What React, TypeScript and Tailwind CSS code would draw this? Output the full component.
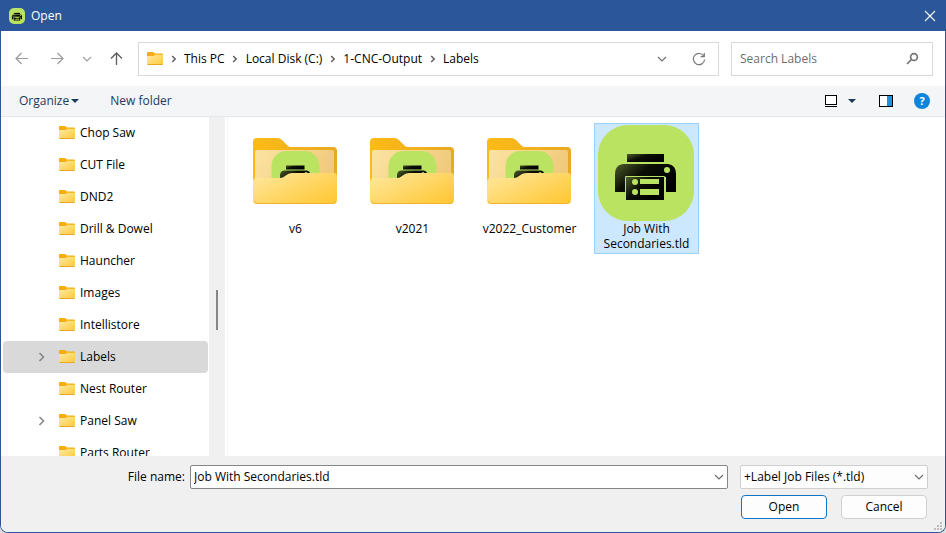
import { useState } from "react";

const folders = [
  { name: "Chop Saw" },
  { name: "CUT File" },
  { name: "DND2" },
  { name: "Drill & Dowel" },
  { name: "Hauncher" },
  { name: "Images" },
  { name: "Intellistore" },
  { name: "Labels", expandable: true, selected: true },
  { name: "Nest Router" },
  { name: "Panel Saw", expandable: true },
  { name: "Parts Router" },
];

const crumbs = ["This PC", "Local Disk (C:)", "1-CNC-Output", "Labels"];

type IconProps = { className?: string };

function SmallFolder({ className = "" }: IconProps) {
  return (
    <svg className={`h-4 w-4 shrink-0 ${className}`} viewBox="0 0 16 16" aria-hidden="true">
      <defs>
        <linearGradient id="smallFront" x1="0" y1="0" x2="1" y2="1">
          <stop offset="0" stopColor="#ffe9a3" />
          <stop offset="1" stopColor="#ffc93c" />
        </linearGradient>
      </defs>
      <path d="M0 2Q0 1 1 1H6L8 2.6H15Q16 2.6 16 3.600V8H0Z" fill="#f5ad0b" />
      <path d="M0 5H6.6L8 3.800H15.5L16 4.200V13Q16 14 15 14H1Q0 14 0 13Z" fill="url(#smallFront)" />
      <path d="M.5 13.500H15.5" stroke="#e8a723" strokeWidth="1" />
    </svg>
  );
}

function Chevron({ dir, className = "" }: IconProps & { dir: "right" | "down" }) {
  return dir === "right" ? (
    <svg className={`shrink-0 ${className}`} width="6" height="8" viewBox="0 0 6 8" fill="none" stroke="currentColor" aria-hidden="true">
      <path d="M1.2 1L4.2 4L1.2 7" strokeWidth="1.5" />
    </svg>
  ) : (
    <svg className={`shrink-0 ${className}`} width="10" height="6" viewBox="0 0 10 6" fill="none" stroke="currentColor" aria-hidden="true">
      <path d="M1 1L5 5L9 1" strokeWidth="1.1" />
    </svg>
  );
}

function PrinterGlyph() {
  return (
    <>
      <defs>
        <linearGradient id="ink" x1="0" y1="0" x2="1" y2="0.6">
          <stop offset="0" stopColor="#4d5f2a" />
          <stop offset="0.45" stopColor="#0c0f06" />
          <stop offset="1" stopColor="#000" />
        </linearGradient>
      </defs>
      <rect width="96" height="96" rx="30" fill="#b9e360" />
      <rect x="29" y="29" width="37" height="8" fill="url(#ink)" />
      <path d="M25 39H70Q78 40 78 49V67H68V52H27V67H17V49Q17 40 25 39Z" fill="url(#ink)" />
      <rect x="28" y="52" width="38" height="23" fill="url(#ink)" />
      <path d="M27.500 67V51.500H66.500V67" fill="none" stroke="#b9e360" />
      <circle cx="69" cy="45" r="3" fill="#b9e360" />
      <circle cx="37" cy="57" r="3" fill="#b9e360" />
      <circle cx="37" cy="67" r="3" fill="#b9e360" />
      <rect x="42" y="54" width="19" height="5" fill="#b9e360" />
      <rect x="42" y="64" width="19" height="6" fill="#b9e360" />
    </>
  );
}

function LabelAppIcon({ className = "" }: IconProps) {
  return (
    <svg className={`shrink-0 ${className}`} viewBox="0 0 96 96" aria-hidden="true">
      <PrinterGlyph />
    </svg>
  );
}

function LargeFolder({ className = "" }: IconProps) {
  return (
    <svg className={`shrink-0 ${className}`} viewBox="0 0 96 96" aria-hidden="true">
      <defs>
        <linearGradient id="back" x1="0" y1="0" x2="1" y2="0">
          <stop offset="0" stopColor="#fdbb16" />
          <stop offset="1" stopColor="#e9a922" />
        </linearGradient>
        <linearGradient id="paper" x1="0" y1="0" x2="1" y2="0.3">
          <stop offset="0" stopColor="#fce3a2" />
          <stop offset="1" stopColor="#f0ca7c" />
        </linearGradient>
        <linearGradient id="front" x1="0" y1="0" x2="1" y2="0.8">
          <stop offset="0" stopColor="#ffe8a0" />
          <stop offset="1" stopColor="#ffc938" />
        </linearGradient>
      </defs>
      <path d="M6 17Q6 13 10 13H30Q33 13 35 15L41 21Q42 22 44 22H86Q90 22 90 26V60H6Z" fill="url(#back)" />
      <rect x="8" y="25" width="79" height="40" rx="2" fill="url(#paper)" />
      <svg x="24" y="26" width="49" height="48" viewBox="0 0 96 96">
        <PrinterGlyph />
      </svg>
      <path d="M6 57Q6 53 10 53H33Q36 53 38 51L41 49Q43 48 46 48H87Q90 48 90 51V75Q90 79 86 79H10Q6 79 6 75Z" fill="url(#front)" />
      <path d="M7 76Q8 78.500 10 78.500H86Q88 78.500 89 76" fill="none" stroke="#f2b42e" />
    </svg>
  );
}

function FileTile({ name, selected = false }: { name: string; selected?: boolean }) {
  return (
    <button
      type="button"
      className={`flex w-[105px] flex-col border pt-px pb-0.5 leading-[15px] ${
        selected ? "border-[#99d1ff] bg-[#cce8ff]" : "border-transparent"
      }`}
    >
      {selected ? <LabelAppIcon className="ml-[3px] h-24 w-24" /> : <LargeFolder className="ml-[3px] h-24 w-24" />}
      <span className="w-full text-center">{name}</span>
    </button>
  );
}

export default function App() {
  const [fileName, setFileName] = useState("Job With Secondaries.tld");

  return (
    <div className="h-screen min-h-[400px] w-full bg-[#dcdcdc]">
      <div
        role="dialog"
        aria-label="Open"
        className="flex h-full flex-col overflow-hidden rounded-b-lg border border-t-0 border-[#2b579a] bg-white font-['Open_Sans','Noto_Sans',sans-serif] text-xs text-black"
      >
        <header className="flex h-[31px] shrink-0 items-center gap-1.5 bg-[#2b579a] pr-[7px] pl-2 text-white">
          <LabelAppIcon className="h-4 w-4" />
          <h1 className="flex-1">Open</h1>
          <button type="button" aria-label="Close" className="flex h-4 w-4 items-center justify-center">
            <svg width="12" height="12" viewBox="0 0 12 12" stroke="currentColor" strokeWidth="1.1">
              <path d="M1 1L11 11M11 1L1 11" />
            </svg>
          </button>
        </header>

        <div className="flex h-[55px] shrink-0 items-center pr-3 pl-3.5">
          <nav aria-label="History" className="flex w-[123px] shrink-0 items-center">
            <button type="button" aria-label="Back" className="mr-[21px] text-[#9b9b9b]">
              <svg width="14" height="14" viewBox="0 0 14 14" fill="none" stroke="currentColor" strokeWidth="1.2">
                <path d="M13 6.500H1M6.500 1L1 6.500L6.500 12" />
              </svg>
            </button>
            <button type="button" aria-label="Forward" className="mr-[18px] text-[#9b9b9b]">
              <svg width="14" height="14" viewBox="0 0 14 14" fill="none" stroke="currentColor" strokeWidth="1.2">
                <path d="M1 6.500H13M7.500 1L13 6.500L7.500 12" />
              </svg>
            </button>
            <button type="button" aria-label="Recent locations" className="mr-[17px] text-[#9b9b9b]">
              <Chevron dir="down" />
            </button>
            <button type="button" aria-label="Up" className="text-[#5c5c5c]">
              <svg width="14" height="14" viewBox="0 0 14 14" fill="none" stroke="currentColor" strokeWidth="1.3">
                <path d="M7.500 13V1M2 6.500L7.500 1L13 6.500" />
              </svg>
            </button>
          </nav>

          <div className="flex h-[34px] min-w-0 flex-1 items-center border border-[#d9d9d9] pr-3 pl-2">
            <SmallFolder />
            <ol className="flex min-w-0 flex-1 items-center whitespace-nowrap">
              {crumbs.map((c) => (
                <li key={c} className="flex items-center">
                  <span className="flex w-[21px] justify-center text-[#5f5f5f]">
                    <Chevron dir="right" />
                  </span>
                  <button type="button">{c}</button>
                </li>
              ))}
            </ol>
            <button type="button" aria-label="Previous locations" className="mr-[25px] text-[#6b6b6b]">
              <Chevron dir="down" />
            </button>
            <button type="button" aria-label="Refresh" className="text-[#7a7a7a]">
              <svg width="14" height="14" viewBox="0 0 14 14" fill="none" stroke="currentColor" strokeWidth="1.2">
                <path d="M12 4.500A5.600 5.600 0 1 0 12.600 7.500M12.300 1V4.700H8.600" />
              </svg>
            </button>
          </div>

          <label className="ml-3 flex h-[34px] w-[202px] items-center border border-[#d9d9d9] pr-3 pl-2">
            <input
              type="search"
              aria-label="Search Labels"
              placeholder="Search Labels"
              className="min-w-0 flex-1 outline-none placeholder:text-[#6d6d6d]"
            />
            <svg width="14" height="14" viewBox="0 0 14 14" fill="none" stroke="#767676" aria-hidden="true">
              <circle cx="8" cy="5" r="3.400" strokeWidth="1.700" />
              <path d="M5.500 7.500L1 12" strokeWidth="1.700" />
            </svg>
          </label>
        </div>

        <div className="flex h-[31px] shrink-0 items-center border-b border-[#e5e7e9] bg-[#f4f5f7] pr-[15px] pl-[18px] text-[#1e395b]">
          <button type="button" className="mr-[31px] flex items-center gap-0.5">
            Organize
            <svg width="8" height="4" viewBox="0 0 8 4" fill="currentColor">
              <path d="M0 0H8L4 4Z" />
            </svg>
          </button>
          <button type="button">New folder</button>
          <div className="flex-1" />
          <button type="button" aria-label="Change view" className="mr-[11px]">
            <svg width="12" height="12" viewBox="0 0 12 12">
              <rect x=".5" y=".5" width="11" height="9" fill="#fff" stroke="#000" />
              <path d="M0 11.500H12" stroke="#000" />
            </svg>
          </button>
          <button type="button" aria-label="More view options" className="mr-[23px]">
            <svg width="8" height="4" viewBox="0 0 8 4" fill="currentColor">
              <path d="M0 0H8L4 4Z" />
            </svg>
          </button>
          <button type="button" aria-label="Preview pane" className="mr-[21px]">
            <svg width="14" height="12" viewBox="0 0 14 12">
              <rect x=".5" y=".5" width="13" height="11" fill="#fff" stroke="#000" />
              <rect x="8" y="1" width="5" height="10" fill="#1c93e0" />
            </svg>
          </button>
          <button
            type="button"
            aria-label="Help"
            className="flex h-4 w-4 items-center justify-center rounded-full bg-[#0f84db] text-[11px] font-bold text-white"
          >
            ?
          </button>
        </div>

        <main className="flex min-h-0 flex-1">
          <aside className="flex w-56 shrink-0">
            <ul className="min-w-0 flex-1 overflow-hidden pr-px pl-0.5">
              {folders.map((f) => (
                <li key={f.name}>
                  <button
                    type="button"
                    className={`flex h-8 w-full items-center rounded-sm ${f.selected ? "bg-[#d9d9d9]" : ""}`}
                  >
                    <span className="flex w-14 justify-end pr-[14px] text-[#868686]">
                      {f.expandable && (
                        <svg width="7" height="10" viewBox="0 0 7 10" fill="none" stroke="currentColor" strokeWidth="1.6">
                          <path d="M1.500 1L5.500 5L1.500 9" />
                        </svg>
                      )}
                    </span>
                    <SmallFolder className="mr-[5px]" />
                    {f.name}
                  </button>
                </li>
              ))}
            </ul>
            <div className="flex w-4 flex-col items-center bg-[#f0f0f0] pt-[173px]">
              <div className="h-10 w-0.5 bg-[#868686]" />
            </div>
          </aside>
          <section
            aria-label="Files"
            className="ml-0.5 flex min-w-0 flex-1 flex-wrap content-start items-start gap-x-3 border-l border-[#f5f5f5] pt-1.5 pl-[15px]"
          >
            <FileTile name="v6" />
            <FileTile name="v2021" />
            <FileTile name="v2022_Customer" />
            <FileTile name="Job With Secondaries.tld" selected />
          </section>
        </main>

        <footer className="relative flex h-[76px] shrink-0 justify-end gap-3 bg-[#f0f0f0] pt-[9px] pr-[17px] pl-3">
          <div className="flex h-6 min-w-0 flex-1 items-center justify-end">
            <label htmlFor="file-name" className="mr-[5px] whitespace-nowrap">
              File name:
            </label>
            <div className="flex h-6 min-w-0 grow-0 basis-[538px] items-center rounded-[2px] border border-[#868686] bg-white pr-[3px]">
              <input
                id="file-name"
                value={fileName}
                onChange={(e) => setFileName(e.target.value)}
                className="min-w-0 flex-1 pl-[3px] outline-none"
              />
              <button type="button" aria-label="Recent file names" className="text-[#6b6b6b]">
                <Chevron dir="down" />
              </button>
            </div>
          </div>
          <div className="flex w-[188px] shrink-0 flex-col gap-1.5">
            <div className="relative">
              <select
                aria-label="File type"
                className="block h-6 w-full appearance-none rounded-[2px] border border-[#cfcfcf] bg-[#fdfdfd] pr-5 pl-[3px]"
              >
                <option>+Label Job Files (*.tld)</option>
              </select>
              <Chevron dir="down" className="pointer-events-none absolute top-[9px] right-1 text-[#6b6b6b]" />
            </div>
            <div className="flex gap-3.5 px-px">
              <button type="button" className="h-6 flex-1 rounded border border-[#0f75c7] bg-[#fdfdfd]">
                Open
              </button>
              <button type="button" className="h-6 flex-1 rounded border border-[#d0d0d0] bg-[#fdfdfd]">
                Cancel
              </button>
            </div>
          </div>
          <svg className="absolute right-0.5 bottom-px" width="9" height="9" viewBox="0 0 9 9" fill="#bdbdbd" aria-hidden="true">
            <path d="M6 0h2v2H6zM6 3h2v2H6zM6 6h2v2H6zM3 3h2v2H3zM3 6h2v2H3zM0 6h2v2H0z" />
          </svg>
        </footer>
      </div>
    </div>
  );
}
